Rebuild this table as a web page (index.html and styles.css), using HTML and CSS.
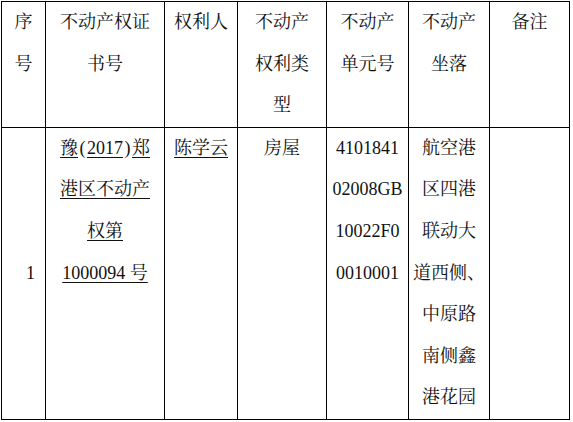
FILE: index.html
```html
<!DOCTYPE html>
<html lang="zh-CN">
<head>
<meta charset="utf-8">
<title>不动产权</title>
<link rel="stylesheet" href="styles.css">
</head>
<body>
<div class="page">
<table class="grid">
  <colgroup>
    <col class="c1"><col class="c2"><col class="c3"><col class="c4"><col class="c5"><col class="c6"><col class="c7">
  </colgroup>
  <thead>
    <tr>
      <th>序<br>号</th>
      <th>不动产权证<br>书号</th>
      <th>权利人</th>
      <th>不动产<br>权利类<br>型</th>
      <th>不动产<br>单元号</th>
      <th>不动产<br>坐落</th>
      <th>备注</th>
    </tr>
  </thead>
  <tbody>
    <tr>
      <td class="idx">1</td>
      <td><span class="u">豫<span class="par">(</span>2017<span class="par">)</span>郑</span><br><span class="u">港区不动产</span><br><span class="u">权第</span><br><span class="u">1000094 号</span></td>
      <td><span class="u">陈学云</span></td>
      <td>房屋</td>
      <td class="num">4101841<br>02008GB<br>10022F0<br>0010001</td>
      <td class="addr">航空港<br>区四港<br>联动大<br>道西侧、<br>中原路<br>南侧鑫<br>港花园</td>
      <td></td>
    </tr>
  </tbody>
</table>
</div>
</body>
</html>
```

FILE: styles.css
```css
html, body {
  margin: 0;
  padding: 0;
  background: #fff;
}
.page {
  padding: 1px 0 0 1px;
}
.grid {
  border-collapse: collapse;
  table-layout: fixed;
  width: 568px;
  font-family: "Liberation Serif", "Noto Serif CJK SC", "Noto Sans CJK SC", serif;
  font-size: 18px;
  line-height: 41.6px;
  color: #111;
}
.c1 { width: 44px; }
.c2 { width: 119px; }
.c3 { width: 73px; }
.c4 { width: 89px; }
.c5 { width: 82px; }
.c6 { width: 81px; }
.c7 { width: 80px; }
.grid th,
.grid td {
  border: 1px solid #000;
  padding: 0;
  text-align: center;
  vertical-align: top;
  font-weight: normal;
  white-space: nowrap;
}
.grid td.idx {
  vertical-align: middle;
  text-align: right;
  padding-right: 10px;
}
.par {
  display: inline-block;
  width: 9px;
  text-align: center;
}
.u {
  text-decoration: underline;
  text-decoration-thickness: 1px;
  text-underline-offset: 3px;
}
```
